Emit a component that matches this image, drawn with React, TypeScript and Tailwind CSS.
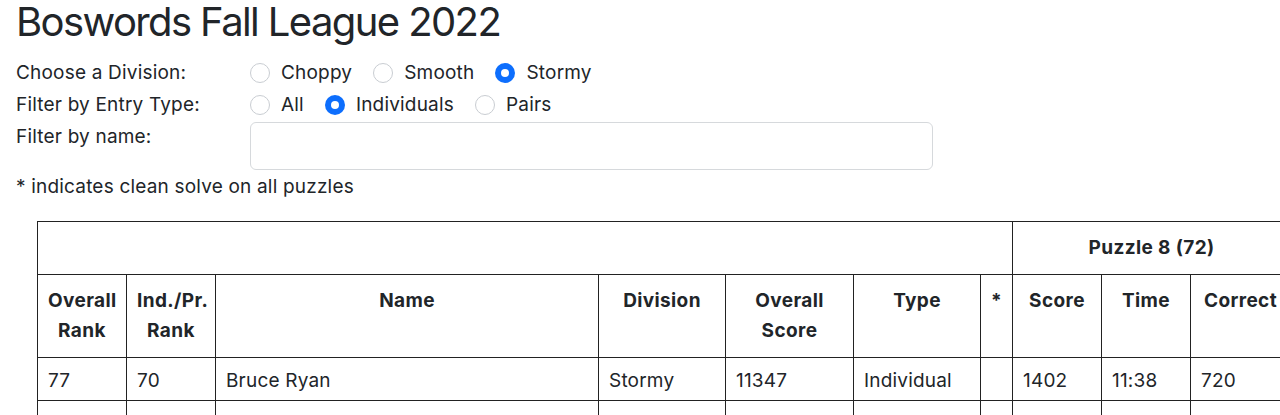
import React from "react";

function Radio({ checked, label }: { checked?: boolean; label: string }) {
  return (
    <label className="flex items-center gap-[11px] mr-[21px]">
      {checked ? (
        <span className="w-[20px] h-[20px] rounded-full bg-[#0d6efd] flex items-center justify-center">
          <span className="w-[8px] h-[8px] rounded-full bg-white" />
        </span>
      ) : (
        <span className="w-[20px] h-[20px] rounded-full border border-[#c9cdd2] bg-white" />
      )}
      <span>{label}</span>
    </label>
  );
}

const cols = [89, 89, 383, 127, 128, 127, 32, 89, 89, 100, 89, 89, 100];

export default function App() {
  const th = "border border-[#222] px-[10px] py-[11px] font-bold text-center align-top leading-[30px] tracking-[0.02em]";
  const td = "border border-[#222] px-[10px] pt-[8px] pb-[4px] leading-[30px]";
  return (
    <div
      className="w-[1280px] h-[415px] overflow-hidden bg-white text-[#212529] text-[19px] tracking-[0.01em]"
      style={{ fontFamily: 'Inter, "Noto Sans", sans-serif' }}
    >
      <div className="px-4">
        <h1 className="text-[40px] leading-[48px] font-normal tracking-[-0.04em] -mt-[2px] mb-[11px]">Boswords Fall League 2022</h1>
        <div className="flex flex-col">
          <div className="flex items-center h-[32px]">
            <div className="w-[234px]">Choose a Division:</div>
            <div className="flex">
              <Radio label="Choppy" />
              <Radio label="Smooth" />
              <Radio checked label="Stormy" />
            </div>
          </div>
          <div className="flex items-center h-[32px]">
            <div className="w-[234px]">Filter by Entry Type:</div>
            <div className="flex">
              <Radio label="All" />
              <Radio checked label="Individuals" />
              <Radio label="Pairs" />
            </div>
          </div>
          <div className="flex items-start mt-[1px]">
            <div className="w-[234px] leading-[30px]">Filter by name:</div>
            <input
              type="text"
              className="w-[683px] h-[48px] border border-[#d6d9dc] rounded-[6px] px-3 outline-none"
            />
          </div>
          <div className="mt-[2px] leading-[30px]">* indicates clean solve on all puzzles</div>
        </div>
        <div className="pl-[21px] mt-[19px]">
          <table className="border-collapse table-fixed" style={{ width: cols.reduce((a, b) => a + b, 0) }}>
            <colgroup>
              {cols.map((w, i) => (
                <col key={i} style={{ width: w }} />
              ))}
            </colgroup>
            <thead>
              <tr>
                <th colSpan={7} className={th}></th>
                <th colSpan={3} className={th}>Puzzle 8 (72)</th>
                <th colSpan={3} className={th}>Puzzle 7 (72)</th>
              </tr>
              <tr>
                <th className={th}>Overall Rank</th>
                <th className={th}>Ind./Pr. Rank</th>
                <th className={th}>Name</th>
                <th className={th}>Division</th>
                <th className={th}>Overall Score</th>
                <th className={th}>Type</th>
                <th className={th}>*</th>
                <th className={th}>Score</th>
                <th className={th}>Time</th>
                <th className={th}>Correct</th>
                <th className={th}>Score</th>
                <th className={th}>Time</th>
                <th className={th}>Correct</th>
              </tr>
            </thead>
            <tbody>
              <tr>
                <td className={td}>77</td>
                <td className={td}>70</td>
                <td className={td}>Bruce Ryan</td>
                <td className={td}>Stormy</td>
                <td className={td}>11347</td>
                <td className={td}>Individual</td>
                <td className={td}></td>
                <td className={td}>1402</td>
                <td className={td}>11:38</td>
                <td className={td}>720</td>
                <td className={td}>1380</td>
                <td className={td}>12:10</td>
                <td className={td}>720</td>
              </tr>
              <tr>
                <td className={td}>78</td>
                <td className={td}>71</td>
                <td className={td}>Jane Doe</td>
                <td className={td}>Stormy</td>
                <td className={td}>11290</td>
                <td className={td}>Individual</td>
                <td className={td}></td>
                <td className={td}>1398</td>
                <td className={td}>12:02</td>
                <td className={td}>720</td>
                <td className={td}>1365</td>
                <td className={td}>13:45</td>
                <td className={td}>720</td>
              </tr>
            </tbody>
          </table>
        </div>
      </div>
    </div>
  );
}
